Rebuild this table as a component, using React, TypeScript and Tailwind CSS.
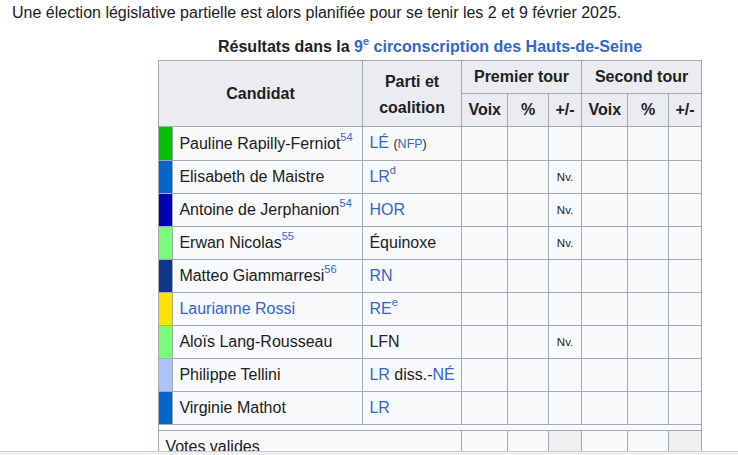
import React from "react";

type Candidate = {
  color: string;
  name: string;
  nameLink?: boolean;
  note?: string;
  party: React.ReactNode;
  nv?: boolean;
};

const link = "text-[#3366cc]";

function Ref({ children }: { children: React.ReactNode }) {
  return <sup className={`${link} text-[11px] top-[-8px]`}>{children}</sup>;
}

const candidates: Candidate[] = [
  {
    color: "#00c000",
    name: "Pauline Rapilly-Ferniot",
    note: "54",
    party: (
      <>
        <span className={link}>LÉ</span>{" "}
        <span className="text-[12.5px]">
          (<span className={link}>NFP</span>)
        </span>
      </>
    ),
  },
  {
    color: "#0066cc",
    name: "Elisabeth de Maistre",
    party: (
      <>
        <span className={link}>LR</span>
        <Ref>d</Ref>
      </>
    ),
    nv: true,
  },
  {
    color: "#0000b4",
    name: "Antoine de Jerphanion",
    note: "54",
    party: <span className={link}>HOR</span>,
    nv: true,
  },
  {
    color: "#77ff77",
    name: "Erwan Nicolas",
    note: "55",
    party: "Équinoxe",
    nv: true,
  },
  {
    color: "#0d378a",
    name: "Matteo Giammarresi",
    note: "56",
    party: <span className={link}>RN</span>,
  },
  {
    color: "#ffe100",
    name: "Laurianne Rossi",
    nameLink: true,
    party: (
      <>
        <span className={link}>RE</span>
        <Ref>e</Ref>
      </>
    ),
  },
  {
    color: "#77ff77",
    name: "Aloïs Lang-Rousseau",
    party: "LFN",
    nv: true,
  },
  {
    color: "#adc1fd",
    name: "Philippe Tellini",
    party: (
      <>
        <span className={link}>LR</span> diss.-<span className={link}>NÉ</span>
      </>
    ),
  },
  {
    color: "#0066cc",
    name: "Virginie Mathot",
    party: <span className={link}>LR</span>,
  },
];

const cell = "border border-[#a2a9b1] px-[6.4px] py-[3px] leading-[26px]";
const head = `${cell} bg-[#eaecf0] text-center font-bold`;

export default function App() {
  return (
    <div className="flex h-[455px] flex-col overflow-hidden bg-white font-['Liberation_Sans',Arial,sans-serif] text-[16px] text-[#202122]">
      <div className="min-h-0 flex-1 overflow-hidden pl-[12px]">
        <p className="leading-[26px]">
          Une élection législative partielle est alors planifiée pour se tenir les 2 et 9 février 2025.
        </p>

        <table className="ml-[146px] mt-[8px] w-[544px] table-fixed border-collapse border border-[#a2a9b1] bg-[#f8f9fa]">
          <caption className="bg-white font-bold leading-[26px]">
            Résultats dans la{" "}
            <span className={link}>
              9<sup className="text-[11px] top-[-7px]">e</sup> circonscription des Hauts-de-Seine
            </span>
          </caption>
          <colgroup>
            <col className="w-[14px]" />
            <col className="w-[190px]" />
            <col className="w-[99px]" />
            <col className="w-[46px]" />
            <col className="w-[41px]" />
            <col className="w-[33px]" />
            <col className="w-[46px]" />
            <col className="w-[41px]" />
            <col className="w-[33px]" />
          </colgroup>
          <thead>
            <tr>
              <th colSpan={2} rowSpan={2} className={head}>
                Candidat
              </th>
              <th rowSpan={2} className={`${head} pt-[5px] leading-[25px]`}>
                Parti et coalition
              </th>
              <th colSpan={3} className={head}>
                Premier tour
              </th>
              <th colSpan={3} className={head}>
                Second tour
              </th>
            </tr>
            <tr>
              <th className={head}>Voix</th>
              <th className={head}>%</th>
              <th className={`${head} px-0`}>+/-</th>
              <th className={head}>Voix</th>
              <th className={head}>%</th>
              <th className={`${head} px-0`}>+/-</th>
            </tr>
          </thead>
          <tbody>
            {candidates.map((c) => (
              <tr key={c.name}>
                <td className={`${cell} px-0`} style={{ backgroundColor: c.color }} />
                <td className={`${cell} whitespace-nowrap`}>
                  <span className={c.nameLink ? link : ""}>{c.name}</span>
                  {c.note && <Ref>{c.note}</Ref>}
                </td>
                <td className={`${cell} whitespace-nowrap`}>{c.party}</td>
                <td className={cell} />
                <td className={cell} />
                <td className={`${cell} px-0 text-center text-[11.5px]`}>{c.nv ? "Nv." : ""}</td>
                <td className={cell} />
                <td className={cell} />
                <td className={cell} />
              </tr>
            ))}
            <tr>
              <td colSpan={9} className="h-[6px] border border-[#a2a9b1] p-0" />
            </tr>
            {["Votes valides", "Votes blancs", "Votes nuls"].map((label) => (
              <tr key={label}>
                <td colSpan={3} className={cell}>
                  {label}
                </td>
                <td className={cell} />
                <td className={cell} />
                <td className={`${cell} bg-[#f0f0f0]`} />
                <td className={cell} />
                <td className={cell} />
                <td className={`${cell} bg-[#f0f0f0]`} />
              </tr>
            ))}
          </tbody>
        </table>
      </div>
      <div className="h-[4px] shrink-0 border-t border-[#c8ccd1] bg-[#f0f0f0]" />
    </div>
  );
}
